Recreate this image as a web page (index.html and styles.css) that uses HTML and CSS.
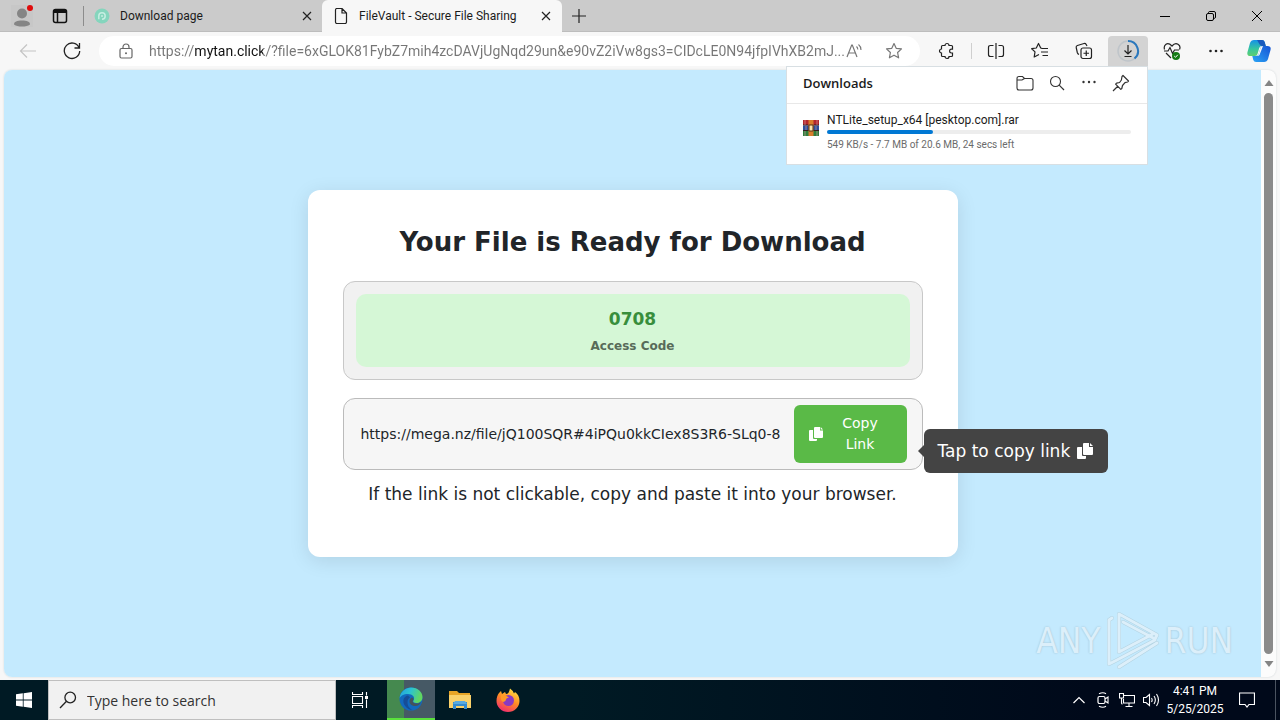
FILE: index.html
```html
<!DOCTYPE html>
<html lang="en">
<head>
<meta charset="utf-8">
<title>FileVault - Secure File Sharing</title>
<link rel="stylesheet" href="styles.css">
</head>
<body>
<header class="tabstrip">
  <button class="profile" aria-label="Profile">
    <svg width="22" height="24" viewBox="0 0 22 24"><path d="M0 1h22v22H0z" fill="#bdbdbd" opacity=".25"/><circle cx="11" cy="9.500" r="5" fill="#858585"/><path d="M3 20.500C3 17.500 6 16.500 11 16.500s8 1 8 4c-2 1.500-4.500 2-8 2s-6-.5-8-2z" fill="#858585"/><circle cx="19" cy="4" r="3" fill="#e00b0b"/></svg>
  </button>
  <button class="workspaces" aria-label="Tab actions">
    <svg width="16" height="16" viewBox="0 0 16 16"><rect x="1.500" y="1.500" width="13" height="13" rx="2" fill="none" stroke="#111" stroke-width="1.500"/><path d="M1.500 3h13M5.500 3v11.500" stroke="#111" stroke-width="1.500"/><path d="M2 2h12v3H2z" fill="#111"/></svg>
  </button>
  <div class="tab">
    <svg width="16" height="16" viewBox="0 0 16 16"><circle cx="8" cy="8" r="7.500" fill="#85d5bd"/><path d="M4.800 11.200V8a3.200 3.200 0 1 1 3.200 3.200" fill="none" stroke="#c6eee2" stroke-width="1.500"/><circle cx="8" cy="8" r="1" fill="#c6eee2"/></svg>
    <span class="tab-title">Download page</span>
    <button class="tab-close" aria-label="Close tab"><svg width="10" height="10" viewBox="0 0 10 10"><path d="M1 1l8 8M9 1L1 9" stroke="#222" stroke-width="1.200"/></svg></button>
  </div>
  <div class="tab tab-active">
    <svg width="16" height="16" viewBox="0 0 16 16"><path d="M2.500 2q0-1.500 1.500-1.500h5L13.500 5v9q0 1.500-1.500 1.500H4q-1.500 0-1.500-1.500zM9 .5V5h4.500" fill="none" stroke="#222" stroke-width="1.200"/></svg>
    <span class="tab-title">FileVault - Secure File Sharing</span>
    <button class="tab-close" aria-label="Close tab"><svg width="10" height="10" viewBox="0 0 10 10"><path d="M1 1l8 8M9 1L1 9" stroke="#222" stroke-width="1.200"/></svg></button>
  </div>
  <button class="new-tab" aria-label="New tab"><svg width="14" height="14" viewBox="0 0 14 14"><path d="M7 0v14M0 7h14" stroke="#222" stroke-width="1.200"/></svg></button>
  <div class="window-controls">
    <button aria-label="Minimize"><svg width="10" height="10" viewBox="0 0 10 10"><path d="M0 5.500h10" stroke="#000"/></svg></button>
    <button aria-label="Restore"><svg width="10" height="10" viewBox="0 0 10 10"><rect x=".5" y="2.500" width="7" height="7" rx="1.500" fill="none" stroke="#000"/><path d="M2.500 2V1.500q.2-1 1.200-1H8q1.500 0 1.500 1.500v4q0 1.200-1.300 1.500" fill="none" stroke="#000"/></svg></button>
    <button aria-label="Close"><svg width="10" height="10" viewBox="0 0 10 10"><path d="M0 0l10 10M10 0L0 10" stroke="#000"/></svg></button>
  </div>
</header>

<nav class="toolbar">
  <button class="nav-button" aria-label="Back"><svg width="18" height="16" viewBox="0 0 18 16"><path d="M17 8H1.500M8 1.500L1.500 8 8 14.500" fill="none" stroke="#c4c4c4" stroke-width="1.200"/></svg></button>
  <button class="nav-button" aria-label="Refresh"><svg width="18" height="18" viewBox="0 0 18 18"><path d="M16 5.500A7.700 7.700 0 1 0 16.700 9M16.500 1v5h-5" fill="none" stroke="#222" stroke-width="1.300"/></svg></button>
  <div class="address">
    <svg width="14" height="16" viewBox="0 0 14 16"><rect x="1" y="5.500" width="12" height="9.500" rx="1.500" fill="none" stroke="#666" stroke-width="1.200"/><path d="M4 5.500V4a3 3 0 0 1 6 0v1.500" fill="none" stroke="#666" stroke-width="1.200"/><circle cx="7" cy="10.200" r="1" fill="#666"/></svg>
    <input class="address-input" type="text" aria-label="Address" value="https://mytan.click/?file=6xGLOK81FybZ7mih4zcDAVjUgNqd29un&amp;e90vZ2iVw8gs3=CIDcLE0N94jfpIVhXB2mJ...">
    <button class="address-button" aria-label="Read aloud"><svg width="17" height="16" viewBox="0 0 17 16"><path d="M1 14L5.700 2h.6L11 14M2.700 10h6.600" fill="none" stroke="#777" stroke-width="1.200"/><path d="M10.500 3.500q1.300 1.200 1.300 3M12.500 1.500q2.500 2 2.500 5.500" fill="none" stroke="#777" stroke-width="1.100"/></svg></button>
    <button class="address-button" aria-label="Favorite"><svg width="18" height="18" viewBox="0 0 18 18"><path d="M9 1.500l2.200 4.800 5.300.6-3.900 3.600 1 5.300L9 13.200l-4.600 2.600 1-5.300L1.500 6.900l5.300-.6z" fill="none" stroke="#777" stroke-width="1.200" stroke-linejoin="round"/></svg></button>
  </div>
  <div class="tools">
    <button class="tool" aria-label="Extensions"><svg width="18" height="18" viewBox="0 0 18 18"><path d="M4.500 3.500H7a2 2 0 0 1 4 0h2.500q1 0 1 1v2.700h-1a1.900 1.900 0 0 0 0 3.800h1v2.500q0 1-1 1H11a2 2 0 0 1-4 0H4.500q-1 0-1-1V11a2 2 0 0 1 0-4V4.500q0-1 1-1z" fill="none" stroke="#222" stroke-width="1.200"/></svg></button>
    <span class="divider"></span>
    <button class="tool" aria-label="Split screen"><svg width="18" height="18" viewBox="0 0 18 18"><path d="M6.500 3.500h-3q-2 0-2 2v7q0 2 2 2h3M11.500 3.500h3q2 0 2 2v7q0 2-2 2h-3M9 1v16" fill="none" stroke="#222" stroke-width="1.200"/></svg></button>
    <button class="tool" aria-label="Favorites"><svg width="18" height="18" viewBox="0 0 18 18"><path d="M11 6.300L9.700 6 7.500 1.500 5.300 6l-4.600.7 3.300 3.200-.8 5.100L8 12.500M10.500 6.500H17M10 10h7M11.500 13.500H17" fill="none" stroke="#222" stroke-width="1.200" stroke-linejoin="round"/></svg></button>
    <button class="tool" aria-label="Collections"><svg width="18" height="18" viewBox="0 0 18 18"><rect x="6" y="6" width="10.500" height="10.500" rx="2" fill="none" stroke="#222" stroke-width="1.200"/><path d="M11.250 8.500v5.500M8.500 11.250H14M4 12.500Q2.700 12 2.300 10.500L1.200 5.500Q.9 4 2.400 3.500L9 1.500Q10.500 1.200 11.200 2.500L12 4" fill="none" stroke="#222" stroke-width="1.200"/></svg></button>
    <div class="download-anchor">
      <button class="tool tool-open" aria-label="Downloads"><svg width="24" height="24" viewBox="0 0 24 24"><circle cx="12" cy="12" r="10" fill="none" stroke="#bfc5ca" stroke-width="1.500"/><path d="M12 2a10 10 0 0 1 6.500 17.600" fill="none" stroke="#2b78bd" stroke-width="2"/><path d="M12 6v9M8.500 11.500L12 15l3.500-3.500M8.500 17.500h7" fill="none" stroke="#222" stroke-width="1.200"/></svg></button>
      <section class="downloads" aria-label="Downloads">
        <div class="downloads-head">
          <h2 class="downloads-title">Downloads</h2>
          <button class="downloads-button" aria-label="Open downloads folder"><svg width="18" height="16" viewBox="0 0 18 16"><path d="M1 3.500Q1 1.500 3 1.500h3.500L8.500 3.500H15q2 0 2 2v7.500q0 2-2 2H3q-2 0-2-2zM1 5h5l2.500-1.500" fill="none" stroke="#333" stroke-width="1.100"/></svg></button>
          <button class="downloads-button" aria-label="Search downloads"><svg width="16" height="16" viewBox="0 0 16 16"><circle cx="6.500" cy="6.500" r="5" fill="none" stroke="#333" stroke-width="1.100"/><path d="M10.200 10.200L15 15" stroke="#333" stroke-width="1.200"/></svg></button>
          <button class="downloads-button" aria-label="More options"><svg width="16" height="16" viewBox="0 0 16 16"><g fill="#333"><circle cx="2.500" cy="7" r="1.200"/><circle cx="8" cy="7" r="1.200"/><circle cx="13.500" cy="7" r="1.200"/></g></svg></button>
          <button class="downloads-button" aria-label="Pin downloads"><svg width="18" height="18" viewBox="0 0 18 18"><path d="M11 1.500l5.500 5.500-1 1-2.500.7-2.500 2.800-.7 3-1 .9-5.200-5.200 1-1 3-.7L9.400 6l.6-3.500zM6 12l-5 5" fill="none" stroke="#333" stroke-width="1.200" stroke-linejoin="round"/></svg></button>
        </div>
        <div class="download-item">
          <svg class="download-icon" width="16" height="16" viewBox="0 0 16 16"><path d="M0 0h16v5H0z" fill="#b3262d"/><path d="M0 5.500h16v5H0z" fill="#2b4f9b"/><path d="M0 10.500h16V16H0z" fill="#2e7d3c"/><path d="M0 5h16M0 10.500h16" stroke="#351c20"/><path d="M5.500 0h5v16h-5z" fill="#d97d2c"/><path d="M6 5h4v6H6z" fill="#fae5ac" stroke="#573319"/><path d="M2 0v5M14 0v5M3 6v4M13 6v4M2 11v5M14 11v5" stroke="#dfa2a5" stroke-width=".6"/></svg>
          <div class="download-info">
            <span class="download-name">NTLite_setup_x64 [pesktop.com].rar</span>
            <div class="progress"><div class="progress-value" style="width:35%"></div></div>
            <span class="download-status">549 KB/s - 7.7 MB of 20.6 MB, 24 secs left</span>
          </div>
        </div>
      </section>
    </div>
    <button class="tool" aria-label="Browser essentials"><svg width="18" height="18" viewBox="0 0 18 18"><path d="M1.500 7.500Q.5 4 3 2.300T9 4q3-3.500 6-1.700t1.500 5.200M3 11l5 5" fill="none" stroke="#222" stroke-width="1.200"/><path d="M1 9h4l2-3.500 2.500 6L11.500 8H16" fill="none" stroke="#222" stroke-width="1.200"/><circle cx="13" cy="14" r="4" fill="#147a14"/><path d="M11.200 14l1.300 1.300 2.300-2.500" fill="none" stroke="#fff"/></svg></button>
    <button class="tool" aria-label="Settings and more"><svg width="16" height="16" viewBox="0 0 16 16"><g fill="#222"><circle cx="2.500" cy="8" r="1.300"/><circle cx="8" cy="8" r="1.300"/><circle cx="13.500" cy="8" r="1.300"/></g></svg></button>
    <button class="tool tool-copilot" aria-label="Copilot">
      <svg width="24" height="24" viewBox="0 0 24 24"><defs><linearGradient id="cpa" x1="0" y1="0" x2="0" y2="1"><stop offset="0" stop-color="#1591e8"/><stop offset=".55" stop-color="#35c5a0"/><stop offset="1" stop-color="#5fcf70"/></linearGradient><linearGradient id="cpb" x1="1" y1="0" x2="0" y2="1"><stop offset="0" stop-color="#1553d5"/><stop offset="1" stop-color="#2ba5f5"/></linearGradient></defs><path d="M7 1h8q2 0 2.700 2l1.100 4h-4q-2 0-2.600 2L10.500 15Q10 17 8 17H3.500Q-.5 17 .5 13L3 4Q4 1 7 1z" fill="url(#cpa)"/><path d="M17 23H9q-2 0-2.700-2l-1-4H9q2 0 2.600-2L13.500 9Q14 7 16 7h4.500q4 0 3 4L21 20q-1 3-4 3z" fill="url(#cpb)"/><path d="M10 1h5q2 0 2.700 2l1.100 4H15q-2 0-2.600-2z" fill="#1859bd"/><path d="M13.500 9Q14 7 16 7l-3.500 9q-.8 1-2.500 1 1.300-.5 1.600-2z" fill="#f7f7f7"/></svg>
    </button>
  </div>
</nav>

<div class="viewport">
  <main class="page">
    <section class="card">
      <h1 class="card-title">Your File is Ready for Download</h1>
      <div class="code-frame">
        <div class="code-box">
          <span class="code-value">0708</span>
          <span class="code-label">Access Code</span>
        </div>
      </div>
      <div class="link-box">
        <input class="link-input" type="text" readonly aria-label="Download link" value="https://mega.nz/file/jQ100SQR#4iPQu0kkCIex8S3R6-SLq0-8">
        <button class="copy-button">
          <svg width="16" height="16" viewBox="0 0 16 16"><path d="M7 1h5v3.500h3V11q0 1-1 1H7q-1 0-1-1V2q0-1 1-1zM12.700 1L15 3.500h-2.300zM2 4h3v8q0 1 1 1h3v1q0 1-1 1H2q-1 0-1-1V5q0-1 1-1z" fill="#fff"/></svg>
          <span class="copy-text">Copy Link</span>
        </button>
        <div class="tooltip" role="tooltip">Tap to copy link
          <svg width="18" height="18" viewBox="0 0 18 18"><path d="M8 1h5v4h4v7q0 1-1 1H8q-1 0-1-1V2q0-1 1-1zM14 1l3 3h-3zM2 5h4v8q0 1 1 1h3v2q0 1-1 1H2q-1 0-1-1V6q0-1 1-1z" fill="#fff"/></svg>
        </div>
      </div>
      <p class="note">If the link is not clickable, copy and paste it into your browser.</p>
    </section>
    <div class="watermark">
      <span>ANY</span>
      <svg width="56" height="62" viewBox="0 0 56 62"><g fill="none" stroke-linejoin="round" stroke-linecap="round"><path d="M14 42V4l38 21-2 4-32-17M52 33L14 57M14 42L48 24M7 8L4 10v44l6-3L50 30" stroke="#b3d3e2" stroke-width="4"/><path d="M14 42V4l38 21-2 4-32-17M52 33L14 57M14 42L48 24M7 8L4 10v44l6-3L50 30" stroke="#dceffa" stroke-width="3"/></g></svg>
      <span>RUN</span>
    </div>
  </main>
  <div class="scrollbar" aria-hidden="true">
    <svg width="10" height="8" viewBox="0 0 10 8"><path d="M5 1l4.500 6h-9z" fill="#858585"/></svg>
    <div class="thumb"></div>
    <svg width="10" height="8" viewBox="0 0 10 8"><path d="M5 7L.5 1h9z" fill="#858585"/></svg>
  </div>
</div>

<footer class="taskbar">
  <button class="task" aria-label="Start"><svg width="16" height="16" viewBox="0 0 16 16"><path d="M0 2.300L6.800 1.300v6.200H0zM7.600 1.200L16 0v7.500H7.600zM0 8.400h6.800v6.300L0 13.700zM7.600 8.400H16V16l-8.400-1.200z" fill="#fff"/></svg></button>
  <label class="search">
    <svg width="18" height="18" viewBox="0 0 18 18"><circle cx="11.200" cy="6.500" r="5.300" fill="none" stroke="#222" stroke-width="1.300"/><path d="M7.500 10.300L1 17" stroke="#222" stroke-width="1.300"/></svg>
    <input class="search-input" type="text" aria-label="Search" placeholder="Type here to search">
  </label>
  <button class="task" aria-label="Task view"><svg width="16" height="16" viewBox="0 0 16 16"><path d="M.5 0v2.500h10V0M.5 16v-2.500h10V16M.5 4.500h10v7H.5zM14.500 0v3.500M14.500 7.500V16" fill="none" stroke="#fff" stroke-width="1.100"/><path d="M13 4h3v3h-3z" fill="#fff"/></svg></button>
  <button class="task task-active" aria-label="Microsoft Edge">
    <svg width="24" height="24" viewBox="0 0 24 24"><defs><linearGradient id="ea" x1="0" y1="0" x2="1" y2=".3"><stop offset="0" stop-color="#249ddf"/><stop offset=".5" stop-color="#2bc3d2"/><stop offset="1" stop-color="#61d760"/></linearGradient></defs><circle cx="12" cy="12" r="11.500" fill="#1269bd"/><path d="M.5 11.500C1.500 4 7 .5 12 .5c7 0 11.500 5 11.500 9.500 0 4-3 6-6 6-2.500 0-4-1-3-2.500C16.500 10 13.500 7 9 7 4.500 7 1.500 9 .5 11.500z" fill="url(#ea)"/><path d="M9 8.500c-5 1-5.500 6-3.500 9.500 2 3.500 5 5 8 5-2.500-1-5-4-5-7.500 0-3 1-4 2.500-5" fill="#164d97"/><path d="M14 13.500c-1 1.500.5 3 3.500 3 2 0 3.500-.6 4.500-1.500-1 2.500-3 4-5.500 4-3.500 0-6-2-6-4.500 0-2 1-3.500 2.500-4 1.500.5 2 2 1 3z" fill="#44525b"/></svg>
  </button>
  <button class="task" aria-label="File Explorer"><svg width="22" height="18" viewBox="0 0 22 18"><path d="M0 0h8l2 2h11v15H0z" fill="#e8a526"/><path d="M0 4h22v13H0z" fill="#fad16a"/><path d="M4 18v-7h14v7h-3v-3H7v3z" fill="#338bd0"/><path d="M6 10h10l2 3H4z" fill="#59aae0"/></svg></button>
  <button class="task" aria-label="Firefox"><svg width="24" height="24" viewBox="0 0 24 24"><defs><linearGradient id="fa" x1=".8" y1="0" x2=".3" y2="1"><stop offset="0" stop-color="#ffe645"/><stop offset=".5" stop-color="#ff8b24"/><stop offset="1" stop-color="#f12b70"/></linearGradient></defs><path d="M3 5l2-2 1 3 3-2 1 2q3 0 4-5.500 3 2 4 5l1-1.500C22 6 23.500 9 23.500 13A11.500 11 0 0 1 .5 13C.5 9.500 1.500 7 3 5z" fill="url(#fa)"/><circle cx="12.500" cy="12.500" r="5.500" fill="#8a3ac2"/><path d="M5 7q3-1 5.500 1L13 9.500q-3 .5-3 2T7.500 14Q4 13 5 7z" fill="#ff9b27"/></svg></button>
  <div class="tray">
    <button class="tray-button" aria-label="Show hidden icons"><svg width="12" height="8" viewBox="0 0 12 8"><path d="M.5 7L6 1.500 11.500 7" fill="none" stroke="#fff" stroke-width="1.200"/></svg></button>
    <button class="tray-button" aria-label="Meet now"><svg width="14" height="16" viewBox="0 0 14 16"><rect x="2" y="4.500" width="7" height="7" rx="1.500" fill="none" stroke="#fff" stroke-width="1.200"/><path d="M9 7l3-2v6L9 9M3 1.800q4-2 7 0M3 14.200q4 2 7 0" fill="none" stroke="#fff" stroke-width="1.100"/></svg></button>
    <button class="tray-button" aria-label="Network"><svg width="16" height="14" viewBox="0 0 16 14"><path d="M5 2.500h10.500v7.500H4.500V6M10 10v3M6.500 13.500h7M2.500 5.500V10q0 1 1 1M.5.500h4v4.500h-4z" fill="none" stroke="#fff" stroke-width="1.100"/></svg></button>
    <button class="tray-button" aria-label="Volume"><svg width="17" height="14" viewBox="0 0 17 14"><path d="M.5 4.500h2.500L6.500 1.500v11L3 9.500H.5zM8.500 5q1.300 2 0 4M11 3q2.700 4 0 8M13.500 1q4 6 0 12" fill="none" stroke="#fff" stroke-width="1.100"/></svg></button>
    <time class="clock" datetime="2025-05-25T16:41"><span>4:41 PM</span><span>5/25/2025</span></time>
    <button class="notifications" aria-label="Notifications"><svg width="16" height="16" viewBox="0 0 16 16"><path d="M.5 1h15v11.500H10L8 15l-2-2.500H.5z" fill="none" stroke="#fff" stroke-width="1.200"/></svg></button>
  </div>
</footer>
</body>
</html>
```
FILE: styles.css
```css
* { box-sizing: border-box; }

body {
  margin: 0;
  min-height: 100vh;
  display: flex;
  flex-direction: column;
  background: #f7f7f7;
  color: #1b1b1b;
  font-family: Roboto, "Open Sans", sans-serif;
  font-size: 12px;
}

button {
  display: flex;
  align-items: center;
  justify-content: center;
  margin: 0;
  padding: 0;
  border: 0;
  background: none;
  font: inherit;
  color: inherit;
}

input {
  min-width: 0;
  margin: 0;
  padding: 0;
  border: 0;
  outline: 0;
  background: none;
  font: inherit;
  color: inherit;
}

svg { display: block; flex: none; }

/* Tab strip */
.tabstrip {
  display: flex;
  height: 32px;
  background: #cbcbcb;
  border-bottom: 1px solid #bdbdbd;
}
.profile { width: 44px; }
.workspaces { width: 32px; }
.tab {
  display: flex;
  align-items: center;
  gap: 10px;
  width: 239px;
  margin-left: 7px;
  padding: 0 7px 0 10px;
}
.tab::before {
  content: "";
  width: 1px;
  height: 20px;
  margin-left: -10px;
  background: #8c8c8c;
}
.tab-active {
  width: 240px;
  height: 32px;
  margin-left: 0;
  border-radius: 6px 6px 0 0;
  background: #f7f7f7;
  padding: 0 8px 0 11px;
}
.tab-active::before { display: none; }
.tab-title { flex: 1; white-space: nowrap; }
.tab-close { width: 16px; height: 16px; }
.new-tab { width: 34px; }
.window-controls { display: flex; margin-left: auto; }
.window-controls button { width: 46px; }

/* Toolbar */
.toolbar {
  display: flex;
  align-items: center;
  height: 38px;
  padding: 0 2px 0 6px;
}
.nav-button { width: 44px; height: 30px; }
.address {
  flex: 1;
  display: flex;
  align-items: center;
  height: 30px;
  margin: 0 7px 0 5px;
  padding: 0 6px 0 20px;
  border-radius: 15px;
  background: #fff;
}
.address-input {
  flex: 1;
  margin: 0 -12px 0 16px;
  font-size: 14px;
  color: transparent;
  background: linear-gradient(90deg, #767676 46px, #111 46px, #111 114px, #767676 114px);
  background-clip: text;
}
.address-button { width: 40px; height: 30px; }
.tools { display: flex; align-items: center; gap: 4px; }
.tool { width: 40px; height: 30px; border-radius: 4px; }
.tool-open { background: #d3d3d3; border-radius: 4px 4px 0 0; }
.tool-copilot { width: 38px; }
.divider { width: 1px; height: 16px; background: #cfcfcf; }

/* Downloads flyout */
.download-anchor { position: relative; }
.downloads {
  position: absolute;
  z-index: 2;
  top: 100%;
  right: 0;
  width: 362px;
  border: 1px solid #d8dfe3;
  background: #fff;
}
.downloads-head {
  display: flex;
  align-items: center;
  height: 37px;
  padding: 0 10px 4px 16px;
  border-bottom: 1px solid #e8e8e8;
}
.downloads-title {
  flex: 1;
  margin: 0;
  font-family: "Open Sans", sans-serif;
  font-size: 13px;
  font-weight: 600;
}
.downloads-button { width: 32px; height: 32px; }
.download-item {
  display: flex;
  gap: 8px;
  padding: 8px 16px 12px;
}
.download-icon { margin-top: 8px; }
.download-info { flex: 1; display: flex; flex-direction: column; }
.download-name { line-height: 16px; }
.progress { height: 4px; margin: 2px 0 4px; border-radius: 2px; background: #ededed; }
.progress-value { height: 4px; border-radius: 2px; background: #0078d4; }
.download-status { font-size: 10px; line-height: 14px; color: #6b6b6b; }

/* Web page */
.viewport {
  flex: 1;
  display: flex;
  margin: 0 4px 3px;
  border-radius: 8px;
  overflow: hidden;
  background: #fcfcfc;
  box-shadow: 0 0 2px #cdd3d6;
}
.page {
  flex: 1;
  position: relative;
  display: flex;
  align-items: center;
  justify-content: center;
  background: #c4eafe;
  font-family: "DejaVu Sans", sans-serif;
}
.card {
  width: 100%;
  max-width: 650px;
  padding: 35px;
  border-radius: 12px;
  background: #fff;
  color: #212529;
  box-shadow: 0 4px 20px rgba(0, 0, 0, 0.1);
}
.card-title {
  margin: 0 0 22px;
  font-size: 26px;
  line-height: 34px;
  text-align: center;
}
.code-frame {
  padding: 12px;
  border: 1px solid #c8c8c8;
  border-radius: 12px;
  background: #f1f1f1;
}
.code-box {
  display: flex;
  flex-direction: column;
  align-items: center;
  gap: 4px;
  padding: 13px 12px 11px;
  border-radius: 10px;
  background: #d5f7d6;
  font-weight: bold;
}
.code-value { font-size: 17px; line-height: 25px; color: #388e3c; }
.code-label { font-size: 12px; line-height: 20px; color: #586b59; }
.link-box {
  position: relative;
  display: flex;
  margin-top: 18px;
  padding: 6px 15px;
  border: 1px solid #bbb;
  border-radius: 12px;
  background: #f6f6f6;
}
.link-input { flex: 1; padding: 0 2px; font-size: 14px; }
.copy-button {
  gap: 8px;
  width: 113px;
  padding: 8px 18px 8px 14px;
  border-radius: 6px;
  background: #5aba47;
  color: #fff;
  font-size: 14px;
  line-height: 21px;
}
.copy-text { flex: 1; }
.tooltip {
  position: absolute;
  left: 100%;
  top: 30px;
  display: flex;
  align-items: center;
  gap: 6px;
  margin-left: 2px;
  padding: 10px 14px;
  border-radius: 6px;
  background: #444;
  color: #fff;
  font-size: 17px;
  line-height: 24px;
  white-space: nowrap;
}
.tooltip::before {
  content: "";
  position: absolute;
  right: 100%;
  top: 50%;
  margin-top: -6px;
  border: 6px solid transparent;
  border-left: 0;
  border-right-color: #444;
}
.note { margin: 12px 0 16px; font-size: 17px; line-height: 24px; text-align: center; }
.watermark {
  position: absolute;
  right: 28px;
  bottom: 5px;
  display: flex;
  align-items: center;
  gap: 4px;
  font-family: "Liberation Sans Narrow", "DejaVu Sans Condensed", sans-serif;
  font-size: 35px;
  color: #dceffa;
  text-shadow: 0 0 2px #9dbccc;
}
.scrollbar {
  display: flex;
  flex-direction: column;
  align-items: center;
  gap: 6px;
  width: 15px;
  padding: 9px 0;
}
.thumb { flex: 1; width: 9px; border-radius: 5px; background: #8a8a8a; }

/* Taskbar */
.taskbar {
  display: flex;
  height: 40px;
  background: linear-gradient(90deg, #001a24, #001a24 45%, #00091a 85%);
  color: #fff;
}
.task { width: 48px; }
.search {
  display: flex;
  align-items: center;
  gap: 10px;
  width: 288px;
  padding-left: 10px;
  border: 1px solid #bfbfbf;
  background: #f1f1f1;
  color: #222;
  font-family: "Open Sans", sans-serif;
}
.search-input { flex: 1; font-size: 14px; }
.search-input::placeholder { color: #333; opacity: 1; }
.task-active {
  margin: 0 1px 0 3px;
  background: linear-gradient(90deg, #45894f 35%, #465965 35%);
  border-bottom: 2px solid #5ae23c;
}
.tray { display: flex; margin-left: auto; padding-right: 4px; }
.tray-button { width: 24px; }
.clock {
  display: flex;
  flex-direction: column;
  align-items: center;
  justify-content: center;
  width: 64px;
  line-height: 18px;
}
.notifications {
  width: 49px;
  padding-right: 8px;
  border-right: 1px solid #4a5360;
}
```
